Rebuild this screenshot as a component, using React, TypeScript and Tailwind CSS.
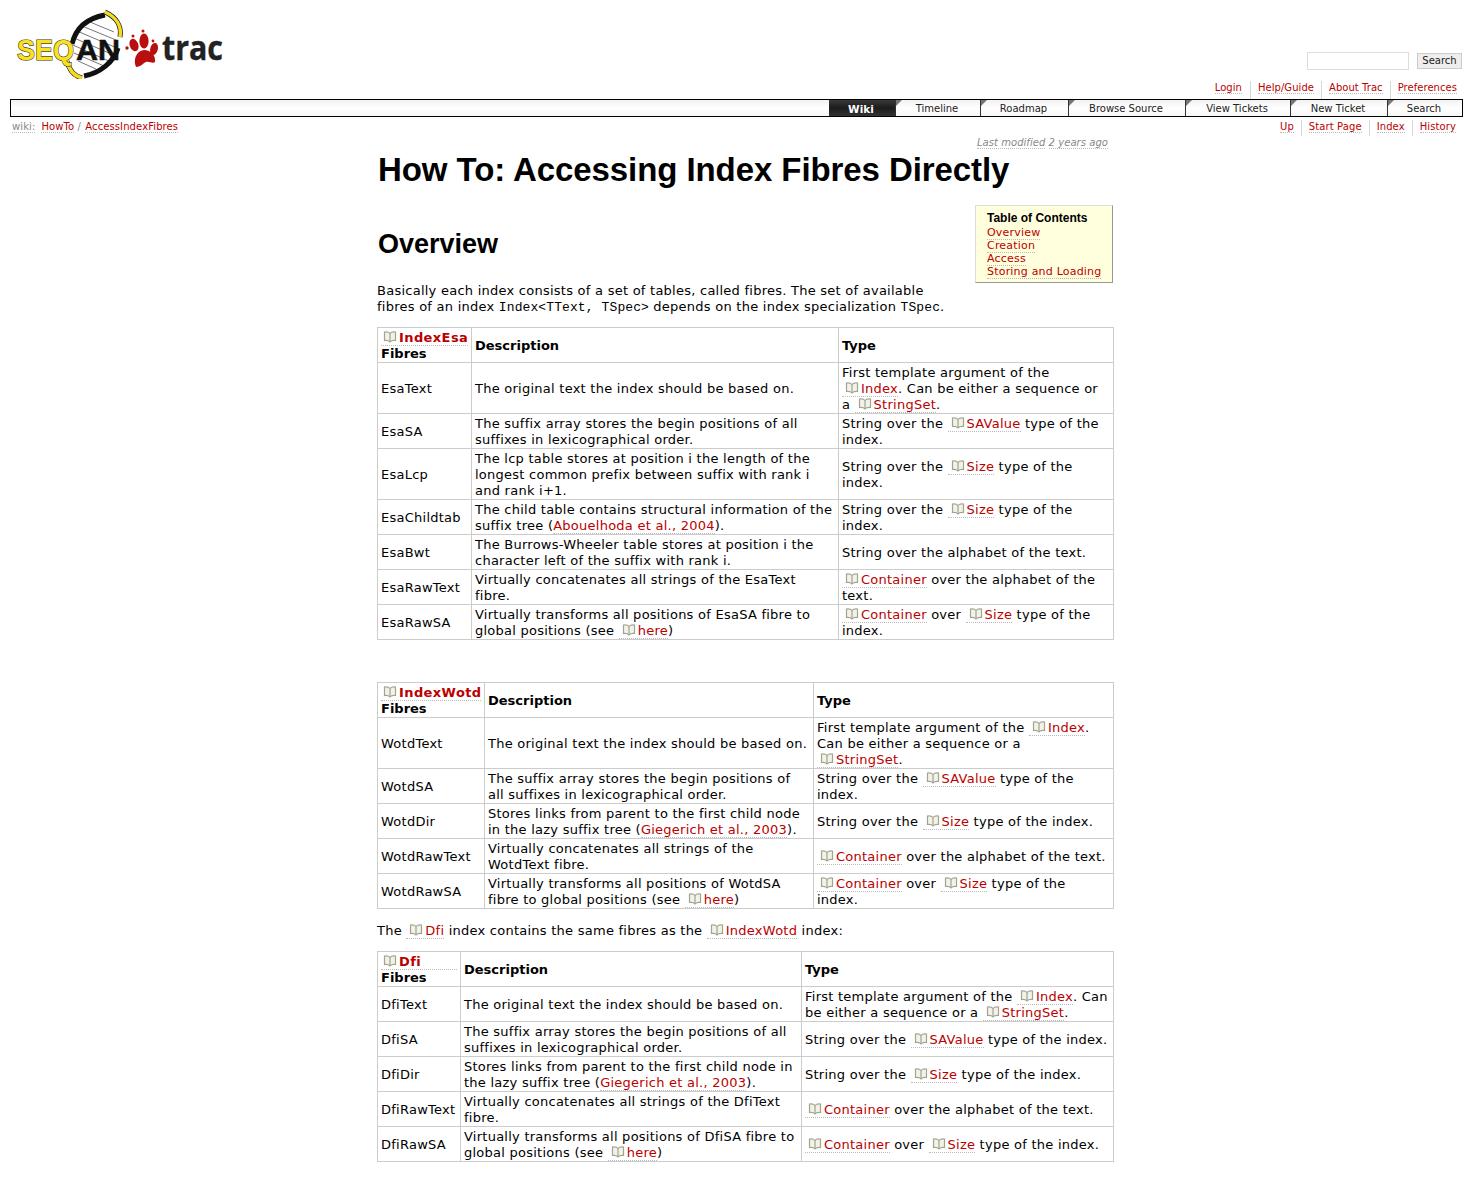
import React from 'react';

const Book = () => (
  <svg width="14" height="12" viewBox="0 0 14 12" className="inline-block align-[-1px] mr-[2px]" fill="none" stroke="#a3a394" strokeWidth="1.2">
    <path d="M7 2.500C6 1.200 3.500 .8 1.500 1v8.500c2-.2 4.500 .2 5.500 1.500 1-1.300 3.500-1.700 5.500-1.500V1C10.500 .8 8 1.200 7 2.500z" fill="#f2f2e6" />
    <path d="M7 2.500V11" />
  </svg>
);

const A = ({ children }: { children: React.ReactNode }) => (
  <a className="text-[#b00] border-b border-dotted border-[#bbb]">{children}</a>
);

// wiki link with the little book icon in front
const W = ({ children }: { children: React.ReactNode }) => (
  <a className="text-[#b00] border-b border-dotted border-[#bbb] pl-[3px] whitespace-nowrap">
    <Book />
    {children}
  </a>
);

const cell = 'border border-[#ccc] px-[3px] pt-[2px] pb-0 align-middle leading-[16px]';

const Th = ({ children }: { children: React.ReactNode }) => (
  <th className={`${cell} text-left font-bold text-[13px] text-black`}>{children}</th>
);

const Td = ({ children }: { children: React.ReactNode }) => (
  <td className={`${cell} tracking-[0.25px] text-black whitespace-nowrap`}>{children}</td>
);

type Row = [React.ReactNode, React.ReactNode, React.ReactNode];

const Fibres = ({ name, widths, rows, className }: { name: string; widths: [number, number, number]; rows: Row[]; className: string }) => (
  <table className={`border-collapse w-[736px] table-fixed ${className}`}>
    <colgroup>
      {widths.map((w, i) => (
        <col key={i} style={{ width: w }} />
      ))}
    </colgroup>
    <thead>
      <tr>
        <Th>
          <a className="text-[#b00] border-b border-dotted border-[#bbb] pl-[2px] whitespace-nowrap block leading-[15px] tracking-[0.4px] text-[13px]">
            <Book />
            {name}
          </a>
          <span className="block leading-[16px]">Fibres</span>
        </Th>
        <Th>Description</Th>
        <Th>Type</Th>
      </tr>
    </thead>
    <tbody>
      {rows.map((r, i) => (
        <tr key={i}>
          <Td>{r[0]}</Td>
          <Td>{r[1]}</Td>
          <Td>{r[2]}</Td>
        </tr>
      ))}
    </tbody>
  </table>
);

const esaRows: Row[] = [
  ['EsaText', 'The original text the index should be based on.', <>First template argument of the<br /><W>Index</W>. Can be either a sequence or<br />a <W>StringSet</W>.</>],
  ['EsaSA', <>The suffix array stores the begin positions of all<br />suffixes in lexicographical order.</>, <>String over the <W>SAValue</W> type of the<br />index.</>],
  ['EsaLcp', <>The lcp table stores at position i the length of the<br />longest common prefix between suffix with rank i<br />and rank i+1.</>, <>String over the <W>Size</W> type of the<br />index.</>],
  ['EsaChildtab', <>The child table contains structural information of the<br />suffix tree (<A>Abouelhoda et al., 2004</A>).</>, <>String over the <W>Size</W> type of the<br />index.</>],
  ['EsaBwt', <>The Burrows-Wheeler table stores at position i the<br />character left of the suffix with rank i.</>, 'String over the alphabet of the text.'],
  ['EsaRawText', <>Virtually concatenates all strings of the EsaText<br />fibre.</>, <><W>Container</W> over the alphabet of the<br />text.</>],
  ['EsaRawSA', <>Virtually transforms all positions of EsaSA fibre to<br />global positions (see <W>here</W>)</>, <><W>Container</W> over <W>Size</W> type of the<br />index.</>],
];

const wotdRows: Row[] = [
  ['WotdText', 'The original text the index should be based on.', <>First template argument of the <W>Index</W>.<br />Can be either a sequence or a<br /><W>StringSet</W>.</>],
  ['WotdSA', <>The suffix array stores the begin positions of<br />all suffixes in lexicographical order.</>, <>String over the <W>SAValue</W> type of the<br />index.</>],
  ['WotdDir', <>Stores links from parent to the first child node<br />in the lazy suffix tree (<A>Giegerich et al., 2003</A>).</>, <>String over the <W>Size</W> type of the index.</>],
  ['WotdRawText', <>Virtually concatenates all strings of the<br />WotdText fibre.</>, <><W>Container</W> over the alphabet of the text.</>],
  ['WotdRawSA', <>Virtually transforms all positions of WotdSA<br />fibre to global positions (see <W>here</W>)</>, <><W>Container</W> over <W>Size</W> type of the<br />index.</>],
];

const dfiRows: Row[] = [
  ['DfiText', 'The original text the index should be based on.', <>First template argument of the <W>Index</W>. Can<br />be either a sequence or a <W>StringSet</W>.</>],
  ['DfiSA', <>The suffix array stores the begin positions of all<br />suffixes in lexicographical order.</>, <>String over the <W>SAValue</W> type of the index.</>],
  ['DfiDir', <>Stores links from parent to the first child node in<br />the lazy suffix tree (<A>Giegerich et al., 2003</A>).</>, <>String over the <W>Size</W> type of the index.</>],
  ['DfiRawText', <>Virtually concatenates all strings of the DfiText<br />fibre.</>, <><W>Container</W> over the alphabet of the text.</>],
  ['DfiRawSA', <>Virtually transforms all positions of DfiSA fibre to<br />global positions (see <W>here</W>)</>, <><W>Container</W> over <W>Size</W> type of the index.</>],
];

// viewBox is in page coordinates, easier to compare with the screenshot
const Logo = () => (
  <svg width="220" height="74" viewBox="10 5 220 74" className="block">
    <path d="M90 22l24 10M82 26l34 14M77 31l40 17M74 38l42 18M73 45l38 17M74 53l30 13M78 61l18 8" fill="none" stroke="#777" strokeWidth="1" />
    <path d="M105 15C88 18 76 27 72 44" fill="none" stroke="#111" strokeWidth="5" />
    <path d="M118 48C114 62 100 73 84 76" fill="none" stroke="#111" strokeWidth="5" />
    <path d="M105 12C116 17 122 26 120 37" fill="none" stroke="#222" strokeWidth="5" />
    <path d="M105 12C116 17 122 26 120 37" fill="none" stroke="#f6da1c" strokeWidth="3.500" />
    <path d="M67 61C69 70 74 76 82 78" fill="none" stroke="#222" strokeWidth="5" />
    <path d="M67 61C69 70 74 76 82 78" fill="none" stroke="#f6da1c" strokeWidth="3.500" />
    <text x="17" y="60" textLength="57" lengthAdjust="spacingAndGlyphs" fontFamily="'Liberation Sans', sans-serif" fontWeight="700" fontSize="30" fill="#fbe01e" stroke="#333" strokeWidth="1.200" paintOrder="stroke">SEQ</text>
    <text x="76" y="60" textLength="44" lengthAdjust="spacingAndGlyphs" fontFamily="'Liberation Sans', sans-serif" fontWeight="700" fontSize="30" fill="#111" stroke="#111" strokeWidth=".6">AN</text>
    <g fill="#b80f0f">
      <path d="M136 67C133 60 136 51 144 50 151 50 156 56 155 62 153 64 149 61 146 62 143 63 141 67 136 67z" />
      <ellipse cx="134" cy="45" rx="4.300" ry="6.500" transform="rotate(-20 134 45)" />
      <ellipse cx="144" cy="41" rx="4.600" ry="7.500" />
      <ellipse cx="154" cy="49" rx="3.800" ry="6.200" transform="rotate(15 154 49)" />
      <circle cx="127" cy="48" r="1.700" />
      <circle cx="133" cy="36" r="1.500" />
      <circle cx="143" cy="31" r="1.500" />
      <circle cx="153" cy="41" r="1.400" />
    </g>
    <text x="162" y="60" textLength="61" lengthAdjust="spacingAndGlyphs" fontFamily="'Open Sans', sans-serif" fontWeight="700" fontSize="34" fill="#222" stroke="#222" strokeWidth=".4">trac</text>
  </svg>
);

const navItems = ['Timeline', 'Roadmap', 'Browse Source', 'View Tickets', 'New Ticket', 'Search'];
const navWidths = ['w-[85px]', 'w-[88px]', 'w-[117px]', 'w-[105px]', 'w-[97px]', 'w-[75px]'];

export default function App() {
  return (
    <div className="w-[1473px] h-[1203px] bg-white text-black font-['DejaVu_Sans',Verdana,sans-serif] text-[13px] leading-[16px] overflow-hidden">
      <div className="flex justify-between pl-[10px] pr-[11px] h-[79px]">
        <div className="pt-[5px]">
          <Logo />
        </div>
        <div className="pt-[52px] flex items-start gap-[8px]">
          <div className="w-[102px] h-[18px] border border-[#ddd] bg-white" />
          <button className="h-[16px] w-[45px] mt-[1px] bg-[#eee] border border-[#ccc] text-[10px] leading-[14px] text-[#222]">Search</button>
        </div>
      </div>
      <div className="flex justify-end pr-[16px] text-[10px] leading-[14px] h-[20px] pt-[2px] tracking-[0.05px]">
        {['Login', 'Help/Guide', 'About Trac', 'Preferences'].map((t, i) => (
          <span key={t} className={i === 0 ? 'pr-[8px]' : 'px-[7px] border-l border-[#d7d7d7] last:pr-0'}>
            <A>{t}</A>
          </span>
        ))}
      </div>
      <div className="mx-[10px] h-[18px] border border-black flex justify-end bg-gradient-to-b from-[#f2f2f2] via-white to-[#f6f6f6] text-[10px] leading-[16px] text-[#222]">
        <div className="w-[66px] bg-gradient-to-b from-[#3a3a3a] via-[#1c1c1c] to-[#333] text-white font-bold text-center text-[10.500px] pt-[1px] pr-[2px]">Wiki</div>
        {navItems.map((t, i) => (
          <div key={t} className={`${navWidths[i]} relative border-l border-[#333] text-center pt-[1px] pr-[2px]`}>
            <span className="absolute left-0 top-0 w-0 h-0 border-t-[6px] border-t-[#777] border-r-[6px] border-r-transparent" />
            {t}
          </div>
        ))}
      </div>
      <div className="flex justify-between pl-[12px] pr-[17px] text-[10px] leading-[14px] pt-[3px] h-[19px] tracking-[0.1px]">
        <div className="text-[#888]">
          <span className="border-b border-dotted border-[#bbb]">wiki:</span>
          <span className="ml-[6px]"><A>HowTo</A></span> / <span className="ml-[1px]"><A>AccessIndexFibres</A></span>
        </div>
        <div className="flex">
          {['Up', 'Start Page', 'Index', 'History'].map((t, i) => (
            <span key={t} className={i === 0 ? 'pr-[7px]' : 'px-[7px] border-l border-[#d7d7d7] last:pr-0'}>
              <A>{t}</A>
            </span>
          ))}
        </div>
      </div>
      <div className="w-[736px] ml-[377px] relative">
        <div className="text-right pr-[5px] text-[10px] leading-[12px] italic text-[#888] pt-[1px] tracking-[0.05px]">
          <span className="border-b border-dotted border-[#bbb]">Last modified</span> <span className="border-b border-dotted border-[#bbb]">2 years ago</span>
        </div>
        <h1 className="font-['Liberation_Sans',Arial,sans-serif] font-bold text-[33px] leading-[38px] mt-[2px] pl-[1px] tracking-[-0.08px]">How To: Accessing Index Fibres Directly</h1>
        <div className="absolute right-0 top-[69px] w-[138px] h-[78px] bg-[#ffd] border border-[#ddd] border-r-[#999] border-b-[#999] pl-[11px] pt-[5px] text-[11px] leading-[13px] tracking-[0.2px]">
          <div className="font-['Liberation_Sans',Arial,sans-serif] font-bold text-[12px] leading-[14px] mb-[1px] tracking-normal">Table of Contents</div>
          <div><A>Overview</A></div>
          <div><A>Creation</A></div>
          <div><A>Access</A></div>
          <div><A>Storing and Loading</A></div>
        </div>
        <h2 className="font-['Liberation_Sans',Arial,sans-serif] font-bold text-[27px] leading-[32px] mt-[39px] pl-[1px]">Overview</h2>
        <p className="mt-[23px] tracking-[0.25px] text-black">
          Basically each index consists of a set of tables, called fibres. The set of available<br />
          fibres of an index <code className="font-['Liberation_Mono',monospace] text-[13px] tracking-[0.1px]">Index&lt;TText, TSpec&gt;</code> depends on the index specialization <code className="font-['Liberation_Mono',monospace] text-[13px] tracking-[0.1px]">TSpec</code>.
        </p>
        <Fibres className="mt-[11px]" name="IndexEsa" widths={[94, 367, 275]} rows={esaRows} />
        <Fibres className="mt-[42px]" name="IndexWotd" widths={[107, 329, 300]} rows={wotdRows} />
        <p className="mt-[14px] tracking-[0.25px] text-black">
          The <W>Dfi</W> index contains the same fibres as the <W>IndexWotd</W> index:
        </p>
        <Fibres className="mt-[12px]" name="Dfi" widths={[83, 341, 312]} rows={dfiRows} />
      </div>
    </div>
  );
}
